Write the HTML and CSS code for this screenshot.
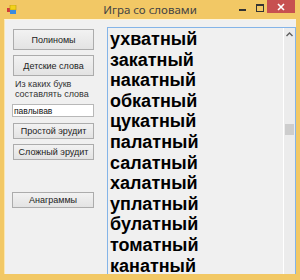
FILE: index.html
```
<!DOCTYPE html>
<html lang="ru">
	<head>
		<meta charset="UTF-8" />
		<title>Игра со словами</title>
		<link rel="stylesheet" href="styles.css">
	</head>
	<body>
		<div class="window">
			<div class="titlebar">
				<svg class="app-icon" width="10" height="10" viewBox="0 0 10 10">
					<rect x="0" y="3" width="3" height="4" fill="#d23a3a" />
					<rect x="3" y="0" width="6" height="5" fill="#f2d21a" stroke="#b89a10" stroke-width="0.6" />
					<rect x="3" y="5" width="6" height="4" fill="#3b8be0" />
				</svg>
				<span class="title">Игра со словами</span>
				<div class="controls">
					<span class="ctl min"></span>
					<span class="ctl max"></span>
					<span class="ctl close">
						<svg width="8" height="8" viewBox="0 0 8 8">
							<path d="M1 1 L7 7 M7 1 L1 7" stroke="#fff" stroke-width="1.6" />
						</svg>
					</span>
				</div>
			</div>
			<div class="client">
				<div class="panel">
					<button class="button big">Полиномы</button>
					<button class="button big second">Детские слова</button>
					<div class="label">Из каких букв<br>составлять слова</div>
					<input class="letters" type="text" value="павлывав" />
					<button class="button small first-small">Простой эрудит</button>
					<button class="button small second-small">Сложный эрудит</button>
					<button class="button small anagram">Анаграммы</button>
				</div>
				<div class="listbox">
					<div class="items">
						<div>ухватный</div>
						<div>закатный</div>
						<div>накатный</div>
						<div>обкатный</div>
						<div>цукатный</div>
						<div>палатный</div>
						<div>салатный</div>
						<div>халатный</div>
						<div>уплатный</div>
						<div>булатный</div>
						<div>томатный</div>
						<div>канатный</div>
					</div>
					<div class="scrollbar">
						<svg class="arrow" width="7" height="5" viewBox="0 0 7 5">
							<path d="M0.5 4 L3.5 1 L6.5 4" fill="none" stroke="#606060" stroke-width="1.4" />
						</svg>
						<div class="thumb"></div>
					</div>
				</div>
			</div>
		</div>
	</body>
</html>
```

FILE: styles.css
```
body {
	margin: 0;
	background-color: #f2c865;
}
.window {
	width: 300px;
	height: 280px;
	background-color: #f2c865;
	display: flex;
	flex-direction: column;
	overflow: hidden;
}
.titlebar {
	height: 19px;
	display: flex;
	align-items: center;
	position: relative;
	font-family: "Noto Sans", "Liberation Sans", sans-serif;
}
.app-icon {
	margin-left: 7px;
	margin-top: 1px;
}
.title {
	position: absolute;
	left: 0;
	right: 0;
	text-align: center;
	font-size: 11.5px;
	color: #444;
	top: 2px;
}
.controls {
	margin-left: auto;
	margin-right: 5px;
	display: flex;
	align-self: flex-start;
	align-items: flex-start;
	height: 13px;
}
.ctl {
	display: block;
	position: relative;
}
.min {
	width: 7px;
	height: 2px;
	background-color: #333;
	margin-top: 9px;
	margin-right: 10px;
}
.max {
	width: 6px;
	height: 5px;
	border: 1px solid #333;
	border-top-width: 2px;
	margin-top: 4px;
	margin-right: 3px;
}
.close {
	width: 28px;
	height: 13px;
	background-color: #c75050;
	display: flex;
	justify-content: center;
	align-items: center;
}
.client {
	flex: 1;
	margin: 0 4px 6px 4px;
	background-color: #f0f0f0;
	border-top: 1px solid #fdf3d9;
	border-left: 1px solid #fbe6b0;
	display: flex;
	overflow: hidden;
	font-family: "Liberation Sans", Arial, sans-serif;
}
.panel {
	width: 81px;
	margin-left: 8px;
	padding-top: 9px;
	display: flex;
	flex-direction: column;
}
.button {
	font-family: "Liberation Sans", Arial, sans-serif;
	font-size: 9px;
	color: #222;
	background: linear-gradient(#f2f2f2, #e3e3e3);
	border: 1px solid #acacac;
	padding: 0;
	width: 81px;
}
.big {
	height: 21px;
}
.second {
	margin-top: 5px;
}
.label {
	font-size: 9px;
	line-height: 10px;
	color: #333;
	margin-top: 3px;
	margin-left: 2px;
	white-space: nowrap;
}
.letters {
	width: 82px;
	height: 13px;
	box-sizing: border-box;
	margin: 5px 0 0 -1px;
	border: 1px solid #b8b8b8;
	background-color: #fff;
	font-family: "Liberation Sans", Arial, sans-serif;
	font-size: 8.5px;
	padding: 0 1px;
	color: #111;
}
.small {
	height: 16px;
}
.first-small {
	margin-top: 6px;
}
.second-small {
	margin-top: 5px;
}
.anagram {
	margin-top: 32px;
	margin-left: -1px;
	width: 82px;
}
.listbox {
	flex: 1;
	margin-left: 13px;
	margin-top: 7px;
	border: 1px solid #84b4e8;
	border-bottom: none;
	display: flex;
	background-color: #f0f0f0;
}
.items {
	flex: 1;
	padding-left: 2px;
	padding-top: 1px;
	font-size: 18px;
	font-weight: bold;
	line-height: 20.6px;
	color: #000;
}
.scrollbar {
	width: 11px;
	border-left: 1px solid #fff;
	background-color: #ececec;
	display: flex;
	flex-direction: column;
	align-items: center;
}
.arrow {
	margin-top: 4px;
}
.thumb {
	width: 9px;
	height: 11px;
	background-color: #cdcdcd;
	margin-top: 87px;
}
```
